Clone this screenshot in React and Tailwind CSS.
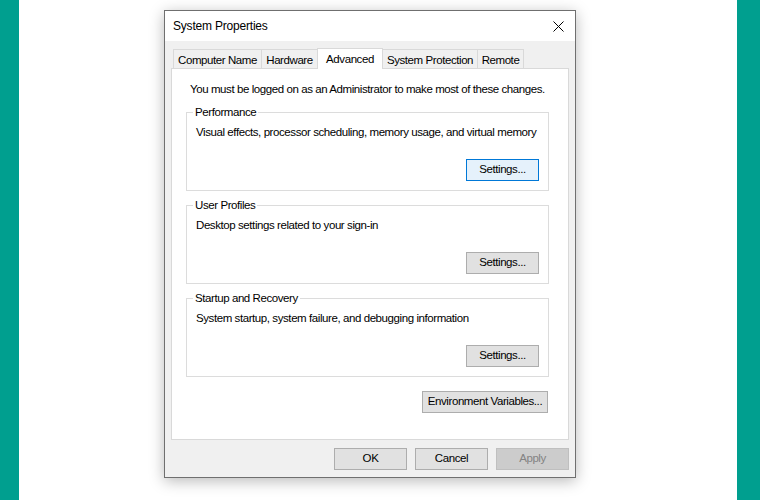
const font = { fontFamily: '"Liberation Sans", Arial, sans-serif' };

function Tab({ label, active, w }) {
  if (active) {
    return (
      <div className={`relative z-10 -mb-px -ml-px flex h-[21px] justify-center border border-b-0 border-[#d9d9d9] bg-white pt-[2px] leading-[16px] ${w}`}>
        {label}
      </div>
    );
  }
  return (
    <div className={`-ml-px flex h-[19px] justify-center border border-b-0 border-[#d9d9d9] bg-[#f0f0f0] pt-[2px] leading-[16px] first:ml-0 ${w}`}>
      {label}
    </div>
  );
}

function Button({ children, focused, disabled, className = "" }) {
  let tone = "border-[#adadad] bg-[#e1e1e1] text-black";
  if (focused) tone = "border-[#0078d7] bg-[#e5f1fb] text-black";
  if (disabled) tone = "border-[#bfbfbf] bg-[#cccccc] text-[#838383]";
  return (
    <div className={`flex h-[22px] items-center justify-center border ${tone} ${className}`}>
      {children}
    </div>
  );
}

function Group({ title, text, focused }) {
  return (
    <div className="relative border border-[#dcdcdc] px-[9px] pb-[9px] pt-[12px]">
      <span className="absolute -top-[8px] left-[6px] bg-white px-[2px] leading-[14px]">{title}</span>
      <div className="h-[14px] leading-[14px]">{text}</div>
      <div className="mt-[20px] flex justify-end">
        <Button focused={focused} className="w-[73px]">Settings...</Button>
      </div>
    </div>
  );
}

export default function App() {
  return (
    <div
      className="flex h-[500px] w-[760px] overflow-hidden whitespace-nowrap bg-white text-[11.5px] tracking-[-0.42px] text-black"
      style={font}
    >
      <div className="w-[19px] bg-[#009f8f]" />
      <div className="flex-1 pl-[145px] pt-[10px]">
        <div className="flex h-[468px] w-[412px] flex-col border border-[#6f6f6f] bg-[#f0f0f0] shadow-[0_3px_14px_rgba(0,0,0,0.28)]">
          <div className="flex h-[30px] items-center justify-between bg-white pl-[8px] pr-[10px]">
            <span className="text-[12px] tracking-[-0.2px]">System Properties</span>
            <svg width="11" height="11" viewBox="0 0 11 11" className="mr-[1px]">
              <path d="M0.5 0.5 L10.5 10.5 M10.5 0.5 L0.5 10.5" stroke="#000" strokeWidth="1" />
            </svg>
          </div>

          <div className="flex flex-1 flex-col px-[6px] pt-[7px]">
            <div className="flex items-end pl-[2px]">
              <Tab label="Computer Name" w="w-[89px]" />
              <Tab label="Hardware" w="w-[57px]" />
              <Tab label="Advanced" w="w-[66px]" active />
              <Tab label="System Protection" w="w-[96px]" />
              <Tab label="Remote" w="w-[47px]" />
            </div>

            <div className="h-[372px] border border-[#d9d9d9] bg-white pl-[14px] pr-[19px] pt-[13px]">
              <div className="pl-[4px] leading-[14px]">
                You must be logged on as an Administrator to make most of these changes.
              </div>
              <div className="mt-[16px] flex flex-col gap-[14px]">
                <Group
                  title="Performance"
                  text="Visual effects, processor scheduling, memory usage, and virtual memory"
                  focused
                />
                <Group title="User Profiles" text="Desktop settings related to your sign-in" />
                <Group
                  title="Startup and Recovery"
                  text="System startup, system failure, and debugging information"
                />
                <div className="flex justify-end pr-[1px]">
                  <Button className="w-[126px]">Environment Variables...</Button>
                </div>
              </div>
            </div>

            <div className="flex justify-end gap-[8px] pt-[8px]">
              <Button className="w-[73px]">OK</Button>
              <Button className="w-[73px]">Cancel</Button>
              <Button disabled className="w-[73px]">Apply</Button>
            </div>
          </div>
        </div>
      </div>
      <div className="w-[23px] bg-[#009f8f]" />
    </div>
  );
}
